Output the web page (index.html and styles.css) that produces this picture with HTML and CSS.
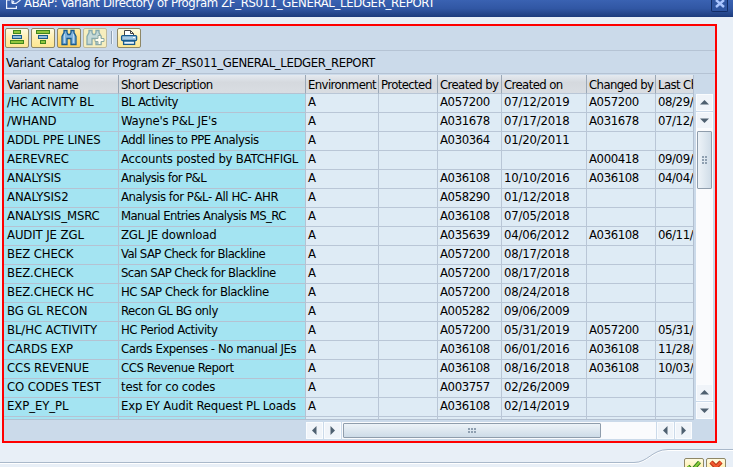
FILE: index.html
```html
<!DOCTYPE html>
<html lang="en">
<head>
<meta charset="utf-8">
<title>ABAP: Variant Directory</title>
<link rel="stylesheet" href="styles.css">
</head>
<body>
<header class="titlebar">
  <svg class="title-icon" width="16" height="10" viewBox="0 0 16 10" fill="none" stroke="#e8effc" stroke-width="1.2"><path d="M4 0H.6V8.4H10.4V6M6 0V3.4M6 3.4L10 3.4L14.5 0M6 3.4L8 1"/></svg>
  <span class="title">ABAP: Variant Directory of Program ZF_RS011_GENERAL_LEDGER_REPORT</span>
  <span class="close"><svg width="16" height="11" viewBox="0 0 16 11"><path d="M4 0L12 7M12 0L4 7" stroke="#a9c4ff" stroke-width="2.4"/></svg></span>
</header>
<main class="panel">
  <div class="toolbar">
    <button class="btn"><svg width="22" height="18" viewBox="0 0 22 18"><g stroke-width="1"><rect x="7.5" y="1.5" width="7" height="3" fill="#8fc63c" stroke="#3f861e"/><rect x="6.500" y="6.500" width="9" height="3" fill="#8fbde0" stroke="#1a5c8c"/><rect x="4.500" y="11.500" width="13" height="3" fill="#8fc63c" stroke="#3f861e"/></g></svg></button>
    <button class="btn"><svg width="22" height="18" viewBox="0 0 22 18"><g stroke-width="1"><rect x="4.500" y="1.500" width="13" height="3" fill="#8fc63c" stroke="#3f861e"/><rect x="6.500" y="6.500" width="9" height="3" fill="#8fbde0" stroke="#1a5c8c"/><rect x="8.500" y="11.500" width="5" height="3" fill="#8fc63c" stroke="#3f861e"/></g></svg></button>
    <button class="btn btn-active"><svg width="22" height="18" viewBox="0 0 22 18"><path d="M6 1.500h3v2l1 2h2l1-2v-2h3v2l2 4v8h-5v-6h-4v6H4v-8l2-4z" fill="#7fb2dc" stroke="#175a8e" stroke-width="1.300"/><path d="M6.500 5v9M15.500 5v9" stroke="#b8d8ee"/></svg></button>
    <button class="btn btn-off"><svg width="22" height="18" viewBox="0 0 22 18"><path d="M5 1.500h3v2l1 2h2l1-2v-2h3v2l2 4v8h-5v-6H8v6H3v-8l2-4z" fill="#c5dad8" stroke="#86aaae" stroke-width="1.300"/><path d="M14 6.500h3v3h3v3h-3v3h-3v-3h-3v-3h3z" fill="#fffdf0" stroke="#8caaa4"/></svg></button>
    <i class="sep"></i>
    <button class="btn"><svg width="22" height="18" viewBox="0 0 22 18"><path d="M6.500 7V1.500h6l3 3V7" fill="#fff" stroke="#444"/><path d="M12.500 1.500v3h3" fill="none" stroke="#444"/><rect x="3.600" y="6.600" width="15" height="5" rx="1" fill="#a8cce6" stroke="#175a8e" stroke-width="1.300"/><rect x="5.600" y="12" width="11" height="3.400" fill="#e7f3fb" stroke="#175a8e" stroke-width="1.300"/><path d="M5 11.500h12" stroke="#175a8e" stroke-width="1.500"/><path d="M15 8.500h2" stroke="#fff"/></svg></button>
  </div>
  <div class="caption"><span>Variant Catalog for Program ZF_RS011_GENERAL_LEDGER_REPORT</span></div>
  <div class="body">
    <div class="grid">
      <div class="row head"><b>Variant name</b><b>Short Description</b><b>Environment</b><b>Protected</b><b>Created by</b><b>Created on</b><b>Changed by</b><b>Last Ch</b></div>
      <div class="row"><b>/HC ACIVITY BL</b><b class="snug">BL Activity</b><b>A</b><b></b><b>A057200</b><b>07/12/2019</b><b>A057200</b><b>08/29/</b></div>
      <div class="row"><b>/WHAND</b><b>Wayne's P&amp;L JE's</b><b>A</b><b></b><b>A031678</b><b>07/17/2018</b><b>A031678</b><b>07/12/</b></div>
      <div class="row"><b>ADDL PPE LINES</b><b class="snug">Addl lines to PPE Analysis</b><b>A</b><b></b><b>A030364</b><b>01/20/2011</b><b></b><b></b></div>
      <div class="row"><b>AEREVREC</b><b>Accounts posted by BATCHFIGL</b><b>A</b><b></b><b></b><b></b><b>A000418</b><b>09/09/</b></div>
      <div class="row"><b>ANALYSIS</b><b class="tight">Analysis for P&amp;L</b><b>A</b><b></b><b>A036108</b><b>10/10/2016</b><b>A036108</b><b>04/04/</b></div>
      <div class="row"><b>ANALYSIS2</b><b class="snug">Analysis for P&amp;L- All HC- AHR</b><b>A</b><b></b><b>A058290</b><b>01/12/2018</b><b></b><b></b></div>
      <div class="row"><b>ANALYSIS_MSRC</b><b class="tight">Manual Entries Analysis MS_RC</b><b>A</b><b></b><b>A036108</b><b>07/05/2018</b><b></b><b></b></div>
      <div class="row"><b>AUDIT JE ZGL</b><b>ZGL JE download</b><b>A</b><b></b><b>A035639</b><b>04/06/2012</b><b>A036108</b><b>06/11/</b></div>
      <div class="row"><b>BEZ CHECK</b><b class="tight">Val SAP Check for Blackline</b><b>A</b><b></b><b>A057200</b><b>08/17/2018</b><b></b><b></b></div>
      <div class="row"><b>BEZ.CHECK</b><b class="tight">Scan SAP Check for Blackline</b><b>A</b><b></b><b>A057200</b><b>08/17/2018</b><b></b><b></b></div>
      <div class="row"><b>BEZ.CHECK HC</b><b class="snug">HC SAP Check for Blackline</b><b>A</b><b></b><b>A057200</b><b>08/24/2018</b><b></b><b></b></div>
      <div class="row"><b>BG GL RECON</b><b class="snug">Recon GL BG only</b><b>A</b><b></b><b>A005282</b><b>09/06/2009</b><b></b><b></b></div>
      <div class="row"><b>BL/HC ACTIVITY</b><b class="snug">HC Period Activity</b><b>A</b><b></b><b>A057200</b><b>05/31/2019</b><b>A057200</b><b>05/31/</b></div>
      <div class="row"><b>CARDS EXP</b><b class="snug">Cards Expenses - No manual JEs</b><b>A</b><b></b><b>A036108</b><b>06/01/2016</b><b>A036108</b><b>11/28/</b></div>
      <div class="row"><b>CCS REVENUE</b><b class="snug">CCS Revenue Report</b><b>A</b><b></b><b>A036108</b><b>08/16/2018</b><b>A036108</b><b>10/03/</b></div>
      <div class="row"><b>CO CODES TEST</b><b>test for co codes</b><b>A</b><b></b><b>A003757</b><b>02/26/2009</b><b></b><b></b></div>
      <div class="row"><b>EXP_EY_PL</b><b>Exp EY Audit Request PL Loads</b><b>A</b><b></b><b>A036108</b><b>02/14/2019</b><b></b><b></b></div>
      <div class="row last"><b></b><b></b><b></b><b></b><b></b><b></b><b></b><b></b></div>
    </div>
    <div class="vscroll">
      <span class="arrow"><svg width="17" height="17"><path d="M4 10.500L8.500 6L13 10.500z"/></svg></span>
      <span class="arrow"><svg width="17" height="17"><path d="M4 6.500L8.500 11L13 6.500z"/></svg></span>
      <div class="vtrack"><div class="vthumb"><i class="grip grip-v"></i></div></div>
      <span class="arrow"><svg width="17" height="17"><path d="M4 10.500L8.500 6L13 10.500z"/></svg></span>
      <span class="arrow"><svg width="17" height="17"><path d="M4 6.500L8.500 11L13 6.500z"/></svg></span>
    </div>
  </div>
  <div class="hscroll">
    <span class="arrow"><svg width="17" height="17"><path d="M10.500 4L6 8.500L10.500 13z"/></svg></span>
    <span class="arrow"><svg width="17" height="17"><path d="M6.500 4L11 8.500L6.500 13z"/></svg></span>
    <div class="htrack"><div class="hthumb"><i class="grip grip-h"></i></div></div>
    <span class="arrow"><svg width="17" height="17"><path d="M10.500 4L6 8.500L10.500 13z"/></svg></span>
    <span class="arrow"><svg width="17" height="17"><path d="M6.500 4L11 8.500L6.500 13z"/></svg></span>
  </div>
</main>
<footer class="footer">
  <svg class="curve" width="733" height="24" viewBox="0 0 733 24"><path d="M0 20.500H634C648 20.500 652 7.500 668 7.500H733" fill="none" stroke="#fff"/><path d="M0 19.500H634C648 19.500 652 6.500 668 6.500H733" fill="none" stroke="#a9b8ca"/></svg>
  <div class="actions">
    <button class="btn act"><svg width="18" height="10" viewBox="0 0 18 10"><path d="M3 6L7 10.500L14.500 2" fill="none" stroke="#2f7d1c" stroke-width="4"/><path d="M3 6L7 10.500L14.500 2" fill="none" stroke="#8ccc3c" stroke-width="2"/></svg></button>
    <button class="btn act"><svg width="18" height="10" viewBox="0 0 18 10"><path d="M4 2L14 12M14 2L4 12" stroke="#b03010" stroke-width="4.500"/><path d="M4 2L14 12M14 2L4 12" stroke="#f05a30" stroke-width="2.500"/></svg></button>
  </div>
</footer>
</body>
</html>
```
FILE: styles.css
```css
* { box-sizing: border-box; }
body {
  margin: 0;
  width: 733px;
  height: 467px;
  overflow: hidden;
  background: #e8eff7;
  color: #000;
  font: 13px/18px "DejaVu Sans Condensed", "DejaVu Sans", sans-serif;
  font-stretch: condensed;
  letter-spacing: -0.2px;
}
svg { display: block; }
.titlebar {
  display: flex;
  height: 17px;
  padding-left: 6px;
  background: linear-gradient(#3a62b2, #3157a4 50%, #1c3b7c);
  color: #fff;
}
.title { margin: -6px 0 0 2px; white-space: nowrap; letter-spacing: -0.35px; }
.close {
  width: 17px;
  height: 12px;
  margin: 0 5px 0 auto;
  border: 1px solid #122c66;
  border-top: 0;
  border-radius: 0 0 2px 2px;
  background: #2f55a2;
}
.panel {
  width: 715px;
  height: 419px;
  margin: 7px 0 0 2px;
  border: 2px solid #f00;
  background: #cbdaea;
}
.toolbar {
  display: flex;
  height: 25px;
  padding: 2px 0 0 1px;
  gap: 2px;
  border-bottom: 1px solid #b5c3d4;
}
.btn {
  width: 24px;
  height: 20px;
  padding: 0;
  overflow: hidden;
  border: 1px solid #8e8767;
  border-radius: 2px;
  background: linear-gradient(#fffbe0, #ffefb0 50%, #fde792);
}
.btn-active { background: linear-gradient(#ffe9a0, #fbcf5c); }
.btn-off { border-color: #bdb99e; background: #f6eebe; }
.sep { width: 2px; height: 13px; margin: 3px 2px 0; border-left: 1px solid #8fa0b2; border-right: 1px solid #eef4fa; }
.caption { height: 23px; padding: 3px 0 0 2px; border-bottom: 1px solid #b5c3d4; white-space: nowrap; letter-spacing: -0.38px; }
.body { display: flex; gap: 2px; margin-top: 1px; }
.grid { width: 690px; height: 345px; border-right: 1px solid #b3c0d0; border-bottom: 1px solid #b3c0d0; overflow: hidden; }
.row { display: grid; grid-template-columns: 115px 187px 73px 59px 64px 85px 69px 37px; height: 19px; }
.row b {
  padding-left: 2px;
  overflow: hidden;
  border-right: 1px solid #b9c6d6;
  border-bottom: 1px solid #b9c6d6;
  background: #deebf5;
  font-weight: normal;
  line-height: 15px;
  white-space: nowrap;
}
.row b:first-child { padding-left: 3px; letter-spacing: -0.1px; }
.row b:nth-child(5), .row b:nth-child(7), .row b:last-child { letter-spacing: -0.4px; }
.row b.snug { letter-spacing: -0.45px; }
.row b.tight { letter-spacing: -0.58px; }
.row b:nth-child(-n+2) { background: #a4e4f2; border-color: #b5c2d2; }
.row b:last-child { border-right: 0; }
.row.head b,
.row.head b:nth-child(-n+2) {
  border-right-color: #9ba8b6;
  background: linear-gradient(#e5eaf0, #d5d9de 40%, #d9dde2);
  letter-spacing: -0.6px;
  line-height: 20px;
}
.row.last { height: 3px; }
.row.last b { border-bottom: 0; }
.vscroll { display: flex; flex-direction: column; width: 17px; height: 325px; margin-top: 19px; }
.arrow { flex: none; width: 17px; height: 17px; background: #f0f4f9; border: 1px solid #fafcfe; }
.arrow svg { margin: -1px; fill: #4f6070; }
.vscroll .arrow + .arrow { margin-top: 1px; }
.hscroll .arrow + .arrow { margin-left: 1px; }
.vtrack { flex: 1; padding: 2px 1px 0; background: #fafbfd; }
.vthumb, .hthumb { display: flex; align-items: center; justify-content: center; border: 1px solid #8f9dac; border-radius: 1px; }
.vthumb { height: 58px; background: linear-gradient(90deg, #edf3f8, #d0dde8); }
.hscroll { display: flex; height: 17px; width: 386px; margin: 2px 0 0 302px; }
.htrack { flex: 1; margin: 0 1px; padding: 1px 0 1px 1px; background: #fafbfd; }
.hthumb { width: 258px; height: 15px; background: linear-gradient(#edf3f8, #cddbe7); }
.grip { background: radial-gradient(circle at 1px 1px, #8e9fb0 0.8px, transparent 1px) 0 0 / 3px 3px; }
.grip-v { width: 6px; height: 9px; }
.grip-h { width: 9px; height: 6px; }
.footer { position: relative; height: 24px; }
.actions { position: absolute; top: 15px; left: 684px; display: flex; gap: 2px; }
.act { width: 20px; height: 20px; }
.act svg { margin: -7px 0 0; }
```
